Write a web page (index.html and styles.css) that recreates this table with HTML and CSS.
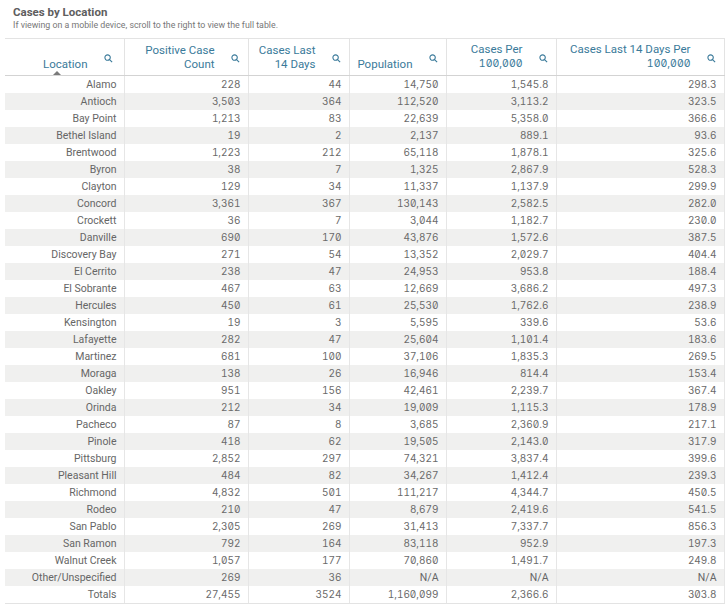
FILE: index.html
```html
<!DOCTYPE html>
<html>
<head>
<meta charset="utf-8">
<link rel="stylesheet" href="styles.css">
</head>
<body>
<div class="page">
  <div class="head">
    <div class="title">Cases by Location</div>
    <div class="subtitle">If viewing on a mobile device, scroll to the right to view the full table.</div>
  </div>
  <table class="grid">
    <colgroup>
      <col class="c1"><col class="c2"><col class="c3"><col class="c4"><col class="c5"><col class="c6">
    </colgroup>
    <thead>
      <tr>
        <th class="loc"><div class="hd"><span class="lbl">Location</span><svg class="srch" viewBox="0 0 10 10"><circle cx="4" cy="4" r="3"/><line x1="6.2" y1="6.2" x2="9" y2="9"/></svg></div><span class="sort"></span></th>
        <th><div class="hd"><span class="lbl">Positive Case<br>Count</span><svg class="srch" viewBox="0 0 10 10"><circle cx="4" cy="4" r="3"/><line x1="6.2" y1="6.2" x2="9" y2="9"/></svg></div></th>
        <th><div class="hd"><span class="lbl">Cases Last<br>14 Days</span><svg class="srch" viewBox="0 0 10 10"><circle cx="4" cy="4" r="3"/><line x1="6.2" y1="6.2" x2="9" y2="9"/></svg></div></th>
        <th><div class="hd"><span class="lbl">Population</span><svg class="srch" viewBox="0 0 10 10"><circle cx="4" cy="4" r="3"/><line x1="6.2" y1="6.2" x2="9" y2="9"/></svg></div></th>
        <th><div class="hd"><span class="lbl">Cases Per<br><span class="num">100,000</span></span><svg class="srch" viewBox="0 0 10 10"><circle cx="4" cy="4" r="3"/><line x1="6.2" y1="6.2" x2="9" y2="9"/></svg></div></th>
        <th><div class="hd"><span class="lbl">Cases Last 14 Days Per<br><span class="num">100,000</span></span><svg class="srch" viewBox="0 0 10 10"><circle cx="4" cy="4" r="3"/><line x1="6.2" y1="6.2" x2="9" y2="9"/></svg></div></th>
      </tr>
    </thead>
    <tbody>
      <tr><td>Alamo</td><td class="num">228</td><td class="num">44</td><td class="num">14,750</td><td class="num">1,545.8</td><td class="num">298.3</td></tr>
      <tr><td>Antioch</td><td class="num">3,503</td><td class="num">364</td><td class="num">112,520</td><td class="num">3,113.2</td><td class="num">323.5</td></tr>
      <tr><td>Bay Point</td><td class="num">1,213</td><td class="num">83</td><td class="num">22,639</td><td class="num">5,358.0</td><td class="num">366.6</td></tr>
      <tr><td>Bethel Island</td><td class="num">19</td><td class="num">2</td><td class="num">2,137</td><td class="num">889.1</td><td class="num">93.6</td></tr>
      <tr><td>Brentwood</td><td class="num">1,223</td><td class="num">212</td><td class="num">65,118</td><td class="num">1,878.1</td><td class="num">325.6</td></tr>
      <tr><td>Byron</td><td class="num">38</td><td class="num">7</td><td class="num">1,325</td><td class="num">2,867.9</td><td class="num">528.3</td></tr>
      <tr><td>Clayton</td><td class="num">129</td><td class="num">34</td><td class="num">11,337</td><td class="num">1,137.9</td><td class="num">299.9</td></tr>
      <tr><td>Concord</td><td class="num">3,361</td><td class="num">367</td><td class="num">130,143</td><td class="num">2,582.5</td><td class="num">282.0</td></tr>
      <tr><td>Crockett</td><td class="num">36</td><td class="num">7</td><td class="num">3,044</td><td class="num">1,182.7</td><td class="num">230.0</td></tr>
      <tr><td>Danville</td><td class="num">690</td><td class="num">170</td><td class="num">43,876</td><td class="num">1,572.6</td><td class="num">387.5</td></tr>
      <tr><td>Discovery Bay</td><td class="num">271</td><td class="num">54</td><td class="num">13,352</td><td class="num">2,029.7</td><td class="num">404.4</td></tr>
      <tr><td>El Cerrito</td><td class="num">238</td><td class="num">47</td><td class="num">24,953</td><td class="num">953.8</td><td class="num">188.4</td></tr>
      <tr><td>El Sobrante</td><td class="num">467</td><td class="num">63</td><td class="num">12,669</td><td class="num">3,686.2</td><td class="num">497.3</td></tr>
      <tr><td>Hercules</td><td class="num">450</td><td class="num">61</td><td class="num">25,530</td><td class="num">1,762.6</td><td class="num">238.9</td></tr>
      <tr><td>Kensington</td><td class="num">19</td><td class="num">3</td><td class="num">5,595</td><td class="num">339.6</td><td class="num">53.6</td></tr>
      <tr><td>Lafayette</td><td class="num">282</td><td class="num">47</td><td class="num">25,604</td><td class="num">1,101.4</td><td class="num">183.6</td></tr>
      <tr><td>Martinez</td><td class="num">681</td><td class="num">100</td><td class="num">37,106</td><td class="num">1,835.3</td><td class="num">269.5</td></tr>
      <tr><td>Moraga</td><td class="num">138</td><td class="num">26</td><td class="num">16,946</td><td class="num">814.4</td><td class="num">153.4</td></tr>
      <tr><td>Oakley</td><td class="num">951</td><td class="num">156</td><td class="num">42,461</td><td class="num">2,239.7</td><td class="num">367.4</td></tr>
      <tr><td>Orinda</td><td class="num">212</td><td class="num">34</td><td class="num">19,009</td><td class="num">1,115.3</td><td class="num">178.9</td></tr>
      <tr><td>Pacheco</td><td class="num">87</td><td class="num">8</td><td class="num">3,685</td><td class="num">2,360.9</td><td class="num">217.1</td></tr>
      <tr><td>Pinole</td><td class="num">418</td><td class="num">62</td><td class="num">19,505</td><td class="num">2,143.0</td><td class="num">317.9</td></tr>
      <tr><td>Pittsburg</td><td class="num">2,852</td><td class="num">297</td><td class="num">74,321</td><td class="num">3,837.4</td><td class="num">399.6</td></tr>
      <tr><td>Pleasant Hill</td><td class="num">484</td><td class="num">82</td><td class="num">34,267</td><td class="num">1,412.4</td><td class="num">239.3</td></tr>
      <tr><td>Richmond</td><td class="num">4,832</td><td class="num">501</td><td class="num">111,217</td><td class="num">4,344.7</td><td class="num">450.5</td></tr>
      <tr><td>Rodeo</td><td class="num">210</td><td class="num">47</td><td class="num">8,679</td><td class="num">2,419.6</td><td class="num">541.5</td></tr>
      <tr><td>San Pablo</td><td class="num">2,305</td><td class="num">269</td><td class="num">31,413</td><td class="num">7,337.7</td><td class="num">856.3</td></tr>
      <tr><td>San Ramon</td><td class="num">792</td><td class="num">164</td><td class="num">83,118</td><td class="num">952.9</td><td class="num">197.3</td></tr>
      <tr><td>Walnut Creek</td><td class="num">1,057</td><td class="num">177</td><td class="num">70,860</td><td class="num">1,491.7</td><td class="num">249.8</td></tr>
      <tr><td>Other/Unspecified</td><td class="num">269</td><td class="num">36</td><td>N/A</td><td>N/A</td><td>N/A</td></tr>
      <tr class="totals"><td>Totals</td><td class="num">27,455</td><td class="num">3524</td><td class="num">1,160,099</td><td class="num">2,366.6</td><td class="num">303.8</td></tr>
    </tbody>
  </table>
</div>
</body>
</html>
```

FILE: styles.css
```css
html, body {
  margin: 0;
  padding: 0;
  background: #ffffff;
}

body {
  font-family: Roboto, "Liberation Sans", sans-serif;
  color: #666666;
}

.page {
  width: 726px;
}

.head {
  padding: 5px 0 0 13px;
  height: 33px;
}

.title {
  font-size: 11.5px;
  font-weight: 700;
  line-height: 15px;
  color: #5e5e5e;
}

.subtitle {
  font-size: 8.8px;
  line-height: 11px;
  color: #777777;
}

.grid {
  margin-left: 5px;
  width: 719px;
  border-collapse: collapse;
  table-layout: fixed;
}

.c1 { width: 119px; }
.c2 { width: 124px; }
.c3 { width: 101px; }
.c4 { width: 97px; }
.c5 { width: 110px; }
.c6 { width: 168px; }

.grid th {
  position: relative;
  height: 36px;
  padding: 0 8px 0 0;
  border-top: 1px solid #e3e3e3;
  border-bottom: 1px solid #d3d3d3;
  border-left: 1px solid #e3e3e3;
  border-right: 1px solid #e3e3e3;
  font-weight: 400;
  font-size: 11.5px;
  color: #3a7a9a;
  vertical-align: top;
}

.grid th.loc {
  border-left: none;
}

.hd {
  display: flex;
  justify-content: flex-end;
  height: 36px;
}

.lbl {
  align-self: flex-end;
  text-align: right;
  line-height: 14px;
  padding-bottom: 4px;
  white-space: nowrap;
}

.lbl .num {
  font-size: 10.5px;
}

.srch {
  align-self: center;
  width: 9px;
  height: 9px;
  margin-left: 16px;
  margin-top: 3px;
  fill: none;
  stroke: #3a7a9a;
  stroke-width: 1.2;
}

.loc .srch {
  margin-right: 3px;
}

.sort {
  position: absolute;
  left: 48px;
  bottom: 0;
  width: 0;
  height: 0;
  border-left: 4px solid transparent;
  border-right: 4px solid transparent;
  border-bottom: 4px solid #7a7a7a;
}

.grid td {
  height: 17px;
  padding: 0 7px 0 0;
  font-size: 10.5px;
  line-height: 17px;
  text-align: right;
  white-space: nowrap;
  border-left: 1px solid #e6e6e6;
  border-right: 1px solid #e6e6e6;
}

.grid td:first-child {
  border-left: none;
}

.grid tbody tr:nth-child(even) td {
  background: #f0f0ef;
}

.grid tr.totals td {
  border-bottom: 1px solid #e3e3e3;
}

.num {
  font-family: Inter, Roboto, sans-serif;
  font-variant-numeric: slashed-zero tabular-nums;
  font-feature-settings: "zero" 1, "tnum" 1;
}

.grid td.num {
  font-size: 10px;
  color: #6a6a6a;
}
```
